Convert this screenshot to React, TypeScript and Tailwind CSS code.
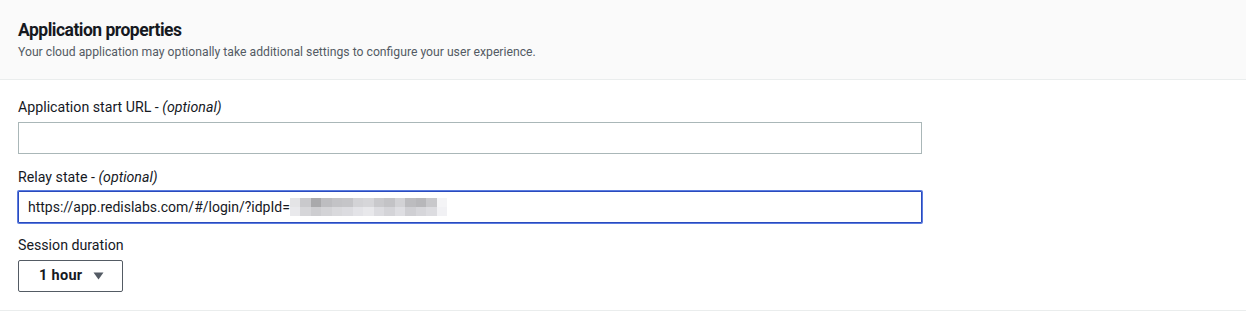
import React from "react";

const blur = [
  ["#e4e4e6", "#c9c9cc", "#a9a9ab", "#bdbdc0", "#c3c3c6", "#c5c5c8", "#d3d3d6", "#d6d6d9", "#c9c9cc", "#c3c3c6", "#d2d2d5", "#bcbcbf", "#b7b7ba", "#c8c8cb", "#f4f4f6"],
  ["#e9e9ec", "#d6d6d9", "#cdcdd0", "#d3d3d6", "#d9d9dc", "#dcdce0", "#e3e3e7", "#e8e8eb", "#dcdce0", "#d4d4d8", "#dedee2", "#cfcfd3", "#d6d6da", "#dcdce0", "#f1f1f4"],
];

export default function App() {
  return (
    <div className="w-[1246px] h-[312px] bg-white" style={{ fontFamily: "Roboto, 'Noto Sans', sans-serif" }}>
      <div className="h-[80px] bg-[#fafafa] border-b border-[#eaeded] px-[18px] pt-[19px]">
        <h2 className="text-[17.5px] leading-[22px] font-bold text-[#16191f] tracking-[-0.5px]">Application properties</h2>
        <p className="mt-[3px] text-[12.2px] leading-[16px] text-[#545b64]">
          Your cloud application may optionally take additional settings to configure your user experience.
        </p>
      </div>
      <div className="h-[231px] border-b border-[#eaeded] px-[18px] pt-[17px]">
        <div className="text-[14.2px] leading-[20px] text-[#16191f]">
          Application start URL - <i>(optional)</i>
        </div>
        <div className="mt-[5px] w-[904px] h-[32px] border border-[#aab7b8] bg-white"></div>
        <div className="mt-[13px] text-[14.2px] leading-[20px] text-[#16191f]">
          Relay state - <i>(optional)</i>
        </div>
        <div className="mt-[4px] w-[904px] h-[32px] border border-[#2a4bbd] shadow-[0_0_0_1px_#5b7ce0] rounded-[1px] bg-white flex items-center pl-[9px]">
          <span className="text-[14px] text-[#16191f]">https://app.redislabs.com/#/login/?idpId=</span>
          <div className="flex flex-col">
            {blur.map((row, i) => (
              <div key={i} className="flex">
                {row.map((c, j) => (
                  <div key={j} className="w-[10.5px] h-[9px]" style={{ backgroundColor: c }} />
                ))}
              </div>
            ))}
          </div>
        </div>
        <div className="mt-[12px] text-[14.2px] leading-[20px] text-[#16191f]">Session duration</div>
        <div className="mt-[5px] w-[105px] h-[32px] border border-[#545b64] rounded-[2px] flex items-center pl-[20px] gap-[11px]">
          <span className="text-[14.5px] font-bold text-[#16191f] tracking-[0.3px]">1 hour</span>
          <svg width="11" height="8" viewBox="0 0 11 8">
            <path d="M0.5 0.5 L10.5 0.5 L5.5 7.5 Z" fill="#545b64" />
          </svg>
        </div>
      </div>
    </div>
  );
}
